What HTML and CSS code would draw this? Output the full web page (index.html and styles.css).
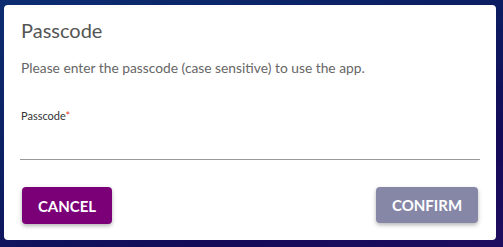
FILE: index.html
```html
<!DOCTYPE html>
<html lang="en">
<head>
<meta charset="utf-8">
<title>Passcode</title>
<link rel="stylesheet" href="styles.css">
</head>
<body>
<div class="backdrop">
  <div class="dialog">
    <h2 class="title">Passcode</h2>
    <p class="message">Please enter the passcode (case sensitive) to use the app.</p>
    <div class="field">
      <label class="label">Passcode<span class="req">*</span></label>
      <div class="input"></div>
    </div>
    <div class="actions">
      <button class="btn btn-cancel">Cancel</button>
      <button class="btn btn-confirm">Confirm</button>
    </div>
  </div>
</div>
</body>
</html>
```
FILE: styles.css
```css
html, body {
  margin: 0;
  padding: 0;
  width: 503px;
  height: 247px;
  overflow: hidden;
}
body {
  font-family: Lato, "Open Sans", sans-serif;
  background: linear-gradient(160deg, #0c2d70 0%, #0b1f62 40%, #140a58 75%, #1f0d60 100%);
}
.backdrop {
  padding: 5px 7px 7px 4px;
}
.dialog {
  box-sizing: border-box;
  width: 492px;
  height: 235px;
  background: #fff;
  border-radius: 4px;
  padding: 13px 16px 16px;
  display: flex;
  flex-direction: column;
}
.title {
  margin: 0;
  font-size: 20px;
  line-height: 24px;
  font-weight: 400;
  color: #555;
  padding-left: 1px;
}
.message {
  margin: 16px 0 0;
  font-size: 13.8px;
  line-height: 20px;
  color: #666;
  padding-left: 1px;
}
.field {
  margin-top: 31px;
}
.label {
  display: block;
  font-size: 11px;
  line-height: 14px;
  color: #333;
  padding-left: 1px;
}
.req {
  color: #e53935;
}
.input {
  height: 36px;
  border-bottom: 1px solid #999;
}
.actions {
  margin-top: 27px;
  padding: 0 2px;
  display: flex;
  justify-content: space-between;
}
.btn {
  font-family: Lato, "Open Sans", sans-serif;
  font-weight: 700;
  font-size: 15px;
  text-transform: uppercase;
  color: #fff;
  border: none;
  border-radius: 4px;
  height: 37px;
  padding: 0;
  box-shadow: 0 2px 4px rgba(0, 0, 0, 0.3);
}
.btn-cancel {
  background: #7b0078;
  width: 90px;
}
.btn-confirm {
  background: #8687a7;
  width: 102px;
  height: 36px;
}
```
